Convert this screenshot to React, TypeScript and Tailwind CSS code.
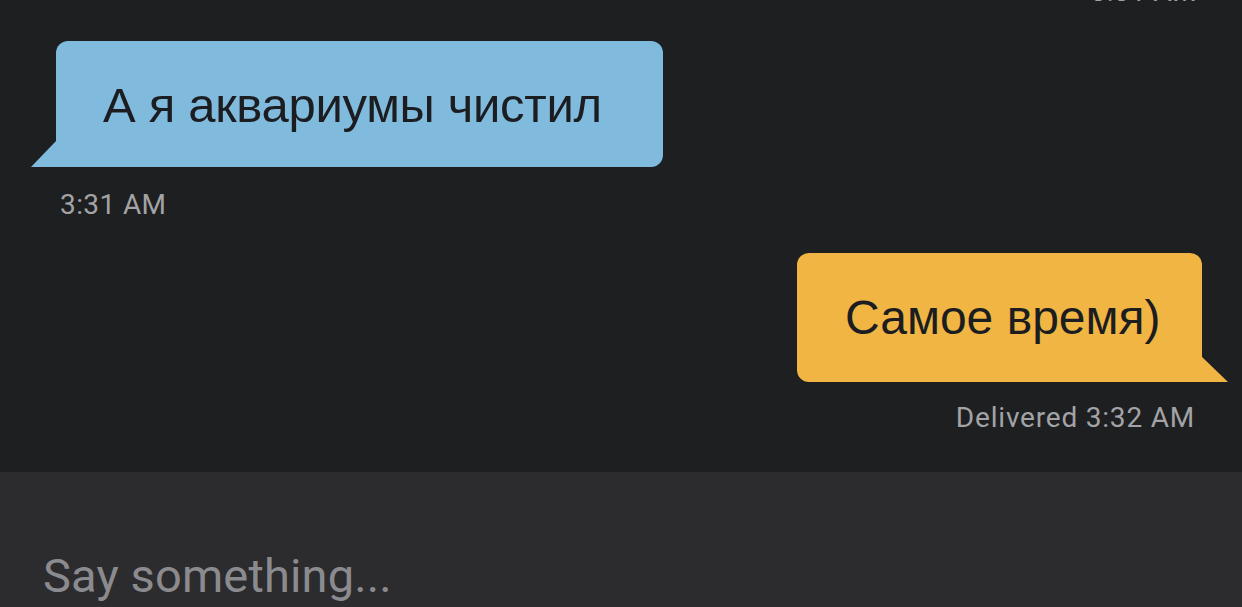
import React from "react";

const bubbleFont = { fontFamily: '"Liberation Sans", Arial, sans-serif' };
const metaFont = { fontFamily: 'Roboto, "Noto Sans", sans-serif' };

export default function App() {
  return (
    <div className="w-[1242px] h-[607px] bg-[#1e1f21] flex flex-col overflow-hidden">
      <div className="flex-1 flex flex-col">
        <div
          className="self-end pr-[45px] -mt-[22px] text-[28px] leading-[28px] tracking-[0.4px] text-[#a3a3a6]"
          style={metaFont}
        >
          3:31 AM
        </div>

        <div className="pl-[56px] mt-[35px]">
          <div className="relative w-[607px] h-[126px] bg-[#80bbdd] rounded-[12px] rounded-bl-none flex items-center pl-[47px] pt-[2px]">
            <svg
              className="absolute left-[-25px] bottom-0"
              width="26"
              height="27"
              viewBox="0 0 26 27"
            >
              <polygon points="0,27 26,27 26,0" fill="#80bbdd" />
            </svg>
            <span
              className="text-[49px] leading-none tracking-[-0.3px] text-[#1b1d20]"
              style={bubbleFont}
            >
              А я аквариумы чистил
            </span>
          </div>
        </div>

        <div
          className="pl-[60px] mt-[22px] text-[28px] leading-[32px] tracking-[0.4px] text-[#a3a3a6]"
          style={metaFont}
        >
          3:31 AM
        </div>

        <div className="flex justify-end pr-[40px] mt-[32px]">
          <div className="relative w-[405px] h-[129px] bg-[#f1b544] rounded-[12px] rounded-br-none flex items-center pl-[48px]">
            <svg
              className="absolute right-[-26px] bottom-0"
              width="27"
              height="26"
              viewBox="0 0 27 26"
            >
              <polygon points="0,0 27,26 0,26" fill="#f1b544" />
            </svg>
            <span className="text-[48px] leading-none text-[#1b1d20]" style={bubbleFont}>
              Самое время)
            </span>
          </div>
        </div>

        <div
          className="self-end pr-[47px] mt-[20px] text-[28px] leading-[32px] tracking-[0.8px] text-[#a3a3a6]"
          style={metaFont}
        >
          Delivered 3:32 AM
        </div>
      </div>

      <div className="h-[135px] bg-[#2c2c2e] flex items-end pl-[43px] pb-[3px]">
        <span
          className="text-[47px] leading-[56px] tracking-[0.15px] text-[#8b8b8f]"
          style={metaFont}
        >
          Say something...
        </span>
      </div>
    </div>
  );
}
